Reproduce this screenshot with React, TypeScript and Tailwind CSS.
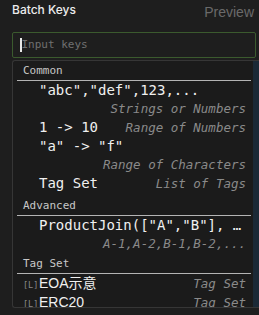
import React from "react";

const mono = { fontFamily: '"DejaVu Sans Mono", "Liberation Mono", monospace' };
const sans = { fontFamily: '"Liberation Sans", "Noto Sans CJK SC", sans-serif' };

function Header({ label, className = "" }: { label: string; className?: string }) {
  return (
    <div
      className={`pt-[1px] pl-[6px] leading-[18px] text-[11px] text-[#c8c8c8] border-b border-[#b4b4b4] ${className}`}
      style={mono}
    >
      {label}
    </div>
  );
}

function Item({ main, desc, inline }: { main: string; desc: string; inline?: boolean }) {
  if (inline) {
    return (
      <div className="flex items-baseline justify-between pl-[22px] pr-[5px] h-[19px] leading-[19px]" style={mono}>
        <span className="text-[14px] text-[#f0f0f0] whitespace-pre">{main}</span>
        <span className="text-[12.5px] italic text-[#8a8a8a] whitespace-pre">{desc}</span>
      </div>
    );
  }
  return (
    <div className="pl-[22px] pr-[5px]" style={mono}>
      <div className="text-[14px] text-[#f0f0f0] h-[19px] leading-[19px] whitespace-pre overflow-hidden">{main}</div>
      <div className="text-[12.5px] italic text-[#8a8a8a] h-[18px] leading-[18px] text-right whitespace-pre">{desc}</div>
    </div>
  );
}

function TagRow({ name }: { name: string }) {
  return (
    <div className="flex items-baseline justify-between pl-[6px] pr-[5px] h-[19px] leading-[19px]">
      <div className="flex items-baseline">
        <span className="text-[8.5px] text-[#8a8a8a] w-[16px]" style={mono}>[L]</span>
        <span className="text-[14px] text-[#f0f0f0]" style={sans}>{name}</span>
      </div>
      <span className="text-[12.5px] italic text-[#8a8a8a]" style={mono}>Tag Set</span>
    </div>
  );
}

export default function App() {
  return (
    <div className="w-[259px] h-[315px] bg-[#1e1e1e] overflow-hidden pl-[12px]">
      <div className="flex justify-between items-start pr-[5px] h-[22px]">
        <div className="pt-[2px] leading-[16px] text-[12px] font-medium text-[#ececec]" style={{ fontFamily: 'Inter, "Liberation Sans", sans-serif' }}>
          Batch Keys
        </div>
        <div className="pt-[4px] leading-[16px] text-[14px] text-[#6a6a6a]" style={sans}>
          Preview
        </div>
      </div>
      <div className="mt-[10px] h-[26px] w-[244px] border border-[#3b5a2e] rounded-[2px] flex items-center pl-[7px]">
        <div className="w-[1.5px] h-[14px] bg-[#e8e8e8]" />
        <span className="text-[11px] text-[#707070]" style={mono}>Input keys</span>
      </div>
      <div className="relative mt-[2px] w-[247px] h-[248px] border border-r-0 border-[#363636] rounded-l-[3px] bg-[#1b1b1b] overflow-hidden">
        <div className="pl-[4px] pr-[8px]">
          <Header label="Common" />
          <Item main={'"abc","def",123,...'} desc="Strings or Numbers" />
          <Item main="1 -> 10" desc="Range of Numbers" inline />
          <Item main={'"a" -> "f"'} desc="Range of Characters" />
          <Item main="Tag Set" desc="List of Tags" inline />
          <Header label="Advanced" className="mt-[3px]" />
          <Item main={'ProductJoin(["A","B"], …'} desc="A-1,A-2,B-1,B-2,..." />
          <Header label="Tag Set" className="mt-[1px]" />
          <TagRow name="EOA示意" />
          <TagRow name="ERC20" />
        </div>
        <div className="absolute right-0 top-0 bottom-0 w-[6px] bg-[#1b2936]" />
      </div>
    </div>
  );
}
